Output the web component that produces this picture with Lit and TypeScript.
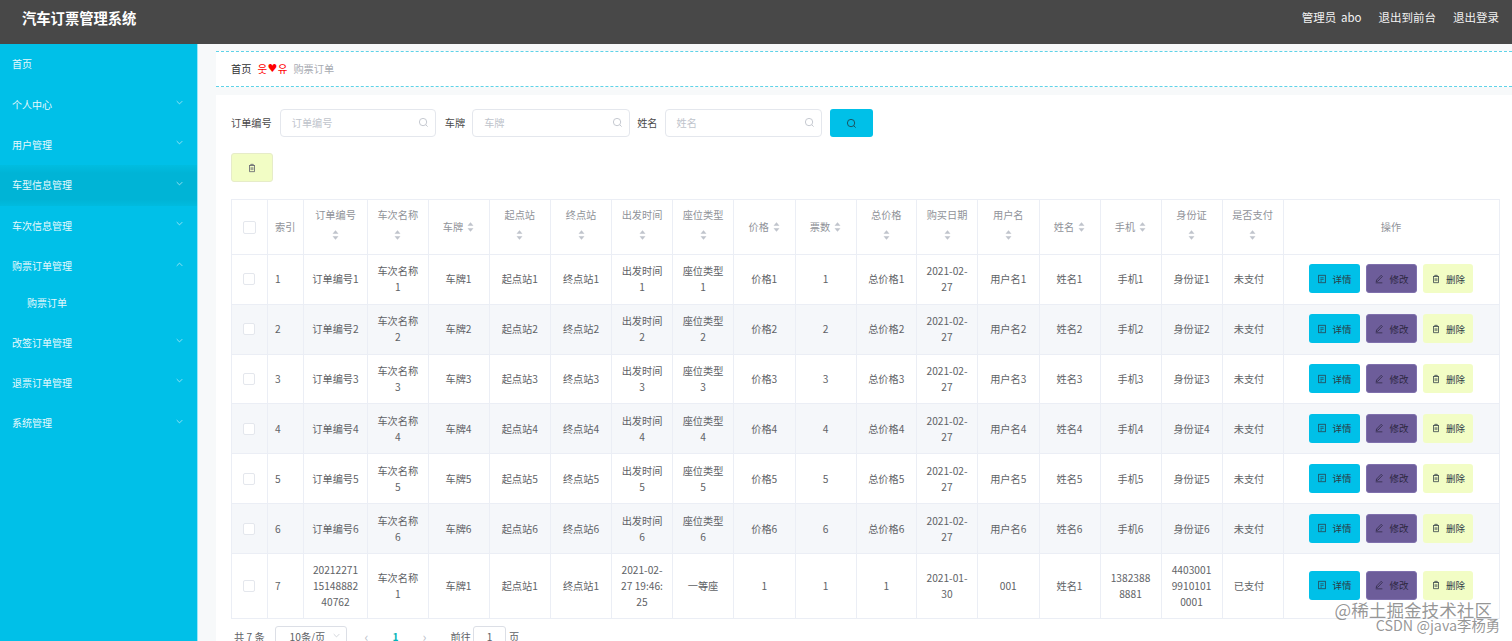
import { LitElement, html, css, svg } from "lit";
import { customElement } from "lit/decorators.js";

const search = html`<svg class="ic-search" viewBox="0 0 12 12" fill="none" stroke="#c0c4cc" stroke-width="1"><circle cx="5.5" cy="5.5" r="4"/><path d="M8.5 8.5l2 2"/></svg>`;
const trash = svg`<path d="M2.5 3h7M4.5 3V1.6h3V3M3 3v7.4h6V3M5 5v3.5M7 5v3.5" fill="none" stroke="currentColor" stroke-width=".9"/>`;
const doc = svg`<rect x="2" y="1.5" width="8" height="9" fill="none" stroke="currentColor" stroke-width=".9"/><path d="M4 4.5h4M4 6.5h4M4 8.5h2" stroke="currentColor" stroke-width=".8"/>`;
const pen = svg`<path d="M8.6 1.6l1.4 1.4-5.4 5.6-2 .6.5-2zM2 10.6h8" fill="none" stroke="currentColor" stroke-width=".9"/>`;
const icon = (p: unknown) => html`<svg class="ic" viewBox="0 0 12 12">${p}</svg>`;
const caret = html`<svg class="caret" viewBox="0 0 8 11"><path d="M4 0l3.4 4H.6zM4 11L.6 7h6.8z" fill="#c0c4cc"/></svg>`;
const chev = (up = false) => html`<svg class="chev" viewBox="0 0 10 6" fill="none" stroke="#cdeff8" stroke-width="1"><path d=${up ? "M1 5l4-4 4 4" : "M1 1l4 4 4-4"}/></svg>`;

const menu: { t: string; arrow?: "d" | "u"; sel?: boolean; sub?: boolean }[] = [
  { t: "首页" },
  { t: "个人中心", arrow: "d" },
  { t: "用户管理", arrow: "d" },
  { t: "车型信息管理", arrow: "d", sel: true },
  { t: "车次信息管理", arrow: "d" },
  { t: "购票订单管理", arrow: "u" },
  { t: "购票订单", sub: true },
  { t: "改签订单管理", arrow: "d" },
  { t: "退票订单管理", arrow: "d" },
  { t: "系统管理", arrow: "d" },
];

const widths = [36, 36, 64, 60.5, 61, 61.5, 61, 61, 61, 61.5, 61, 60.5, 61, 61.5, 61, 61, 61, 61, 216];
const heads: [string, "b" | "i"][] = [
  ["订单编号", "b"], ["车次名称", "b"], ["车牌", "i"], ["起点站", "b"], ["终点站", "b"], ["出发时间", "b"],
  ["座位类型", "b"], ["价格", "i"], ["票数", "i"], ["总价格", "b"], ["购买日期", "b"], ["用户名", "b"],
  ["姓名", "i"], ["手机", "i"], ["身份证", "b"], ["是否支付", "b"],
];
const names = ["订单编号", "车次名称", "车牌", "起点站", "终点站", "出发时间", "座位类型", "价格", "", "总价格", "", "用户名", "姓名", "手机", "身份证"];
const rows: string[][] = [1, 2, 3, 4, 5, 6].map((i) => [
  ...names.map((n, k) => (k === 8 ? String(i) : k === 10 ? "2021-02-27" : n + i)),
  "未支付",
]);
rows.push(["202122711514888240762", "车次名称1", "车牌1", "起点站1", "终点站1", "2021-02-27 19:46:25", "一等座", "1", "1", "1", "2021-01-30", "001", "姓名1", "13823888881", "440300199101010001", "已支付"]);

@customElement("app-root")
export class AppRoot extends LitElement {
  static styles = css`
    :host { display: block; width: 1512px; height: 641px; overflow: hidden; position: relative; font-family: "Noto Sans CJK SC", "Liberation Sans", sans-serif; font-size: 10.2px; color: #606266; background: #f7f9fa; }
    .top { height: 44px; box-sizing: border-box; background: #484848; display: flex; align-items: center; justify-content: space-between; padding: 0 13px 10px 22px; color: #fff; }
    .brand { font-size: 14.3px; font-weight: 700; }
    .links { display: flex; gap: 17px; font-size: 11.5px; color: #f2f2f2; }
    .who { word-spacing: 2px; }
    .body { display: flex; height: 597px; }
    .side { width: 198px; box-sizing: border-box; flex: none; background: #00c0e8; border-right: 1px solid #9be6f8; color: #e6f9fd; }
    .mi { height: 40.4px; box-sizing: border-box; padding: 0 14px 1px 12px; display: flex; align-items: center; justify-content: space-between; font-size: 10px; }
    .mi.on { background: linear-gradient(#00bde0, #00b4d6 20%, #00b4d6 85%, #00bbdf); }
    .mi.sub { height: 36px; padding: 0 14px 3px 27px; }
    .chev { width: 7px; height: 5px; margin-bottom: 3px; }
    .main { flex: 1; min-width: 0; padding: 7px 0 0 18px; display: flex; flex-direction: column; }
    .crumb { height: 36px; box-sizing: border-box; background: #fff; border-top: 1px dashed #5fd3e8; border-bottom: 1px dashed #5fd3e8; display: flex; align-items: center; padding: 0 0 2px 15px; gap: 6px; color: #303133; flex: none; }
    .sep { color: #f00; font-size: 11px; display: flex; align-items: center; width: 30px; justify-content: space-between; font-family: "DejaVu Sans", sans-serif; }
    .sep2 { font-family: "Noto Sans CJK KR", sans-serif; font-size: 10.5px; }
    .crumb .cur { color: #a8abb2; }
    .panel { flex: 1; margin-top: 8px; background: #fff; padding: 14px 12px 0 15px; min-height: 0; }
    .filters { display: flex; align-items: center; height: 28px; color: #4a4a4a; }
    .filters > span { margin-bottom: 2px; }
    .inp { height: 28px; box-sizing: border-box; border: 1px solid #e4e7ed; border-radius: 4px; display: flex; align-items: center; justify-content: space-between; padding: 0 6px 2px 11px; color: #c0c4cc; }
    .i1 { width: 156px; margin: 0 9px 0 8px; }
    .i2 { width: 158px; margin: 0 7px 0 7px; }
    .i3 { width: 157px; margin: 0 8px 0 7px; }
    .ic-search { width: 11px; height: 11px; }
    .sbtn { width: 43px; height: 28px; border-radius: 3px; background: #00c0e8; display: flex; align-items: center; justify-content: center; }
    .ic { width: 10px; height: 10px; flex: none; }
    .del { margin-top: 16px; width: 42px; height: 29px; box-sizing: border-box; border: 1px solid #e6ecc8; border-radius: 3px; background: #f2fdc5; display: flex; align-items: center; justify-content: center; color: #556; }
    table { margin-top: 17px; width: 1268px; table-layout: fixed; border-collapse: collapse; border-top: 1px solid #ebeef5; border-left: 1px solid #ebeef5; border-right: 1px solid #ebeef5; background: #fff; }
    th, td { border-bottom: 1px solid #ebeef5; border-right: 1px solid #ebeef5; padding: 0 7.5px; text-align: center; line-height: 16px; font-weight: 400; box-sizing: border-box; word-break: break-all; overflow: hidden; }
    th { height: 55px; color: #909399; line-height: 20px; padding: 0 4px; }
    td { height: 49.83px; }
    td:nth-last-child(2) { padding-right: 14px; padding-left: 7px; }
    tr.tall td { height: 65px; }
    tr.st td { background: #f5f7fa; }
    th.l, td.l { text-align: left; padding-left: 7px; padding-right: 0; }
    th.cbc, td.cbc { padding: 0 0 0 11px; text-align: left; }
    .cb { display: block; width: 10px; height: 10px; border: 1px solid #e4e7ed; border-radius: 2px; background: #fff; }
    th .cb { width: 11px; height: 11px; }
    .caret { width: 7px; height: 10px; vertical-align: -1px; }
    .b { display: block; }
    .b .caret { display: block; margin: 5px auto 10px; }
    .i .caret { margin-left: 4px; }
    .acts { display: flex; justify-content: center; gap: 6px; margin-bottom: 1px; }
    .btn { width: 51px; height: 29px; box-sizing: border-box; border-radius: 3px; display: flex; align-items: center; justify-content: center; gap: 5px; font-size: 9.5px; color: #2e3a45; }
    .btn.a { background: #00c0e8; }
    .btn.e { background: #6d5d9a; color: #2c2740; border: 1px solid #7f70ad; }
    .btn.d { background: #f2fdc5; width: 50px; }
    td.td-a { padding: 0; }
    .pager { display: flex; align-items: center; height: 18px; margin-top: 9px; padding-left: 3px; }
    .psel { width: 72px; height: 22px; box-sizing: border-box; border: 1px solid #dcdfe6; border-radius: 3px; margin-left: 10px; display: flex; align-items: center; justify-content: space-between; padding: 0 6px 0 14px; flex: none; }
    .nav { color: #c0c4cc; margin-left: 18px; width: 8px; font-size: 13px; }
    .pg { color: #00b5b8; font-weight: 700; margin-left: 20px; width: 10px; }
    .nav2 { margin-left: 20px; }
    .go { margin-left: 20px; }
    .gi { width: 33px; height: 22px; box-sizing: border-box; border: 1px solid #dcdfe6; border-radius: 3px; margin: 0 3px 0 2px; display: flex; align-items: center; justify-content: center; flex: none; }
    .wm { position: absolute; right: 20px; top: 599px; font-size: 17.6px; color: rgba(110,110,110,.72); line-height: 22px; white-space: nowrap; }
    .wm2 { position: absolute; right: 12px; top: 616px; font-size: 14.3px; color: rgba(110,110,110,.72); line-height: 18px; white-space: nowrap; }
  `;

  render() {
    return html`
      <div class="top">
        <div class="brand">汽车订票管理系统</div>
        <div class="links"><span class="who">管理员 abo</span><span>退出到前台</span><span>退出登录</span></div>
      </div>
      <div class="body">
        <nav class="side">
          ${menu.map((m) => html`<div class="mi ${m.sel ? "on" : ""} ${m.sub ? "sub" : ""}"><span>${m.t}</span>${m.arrow ? chev(m.arrow === "u") : ""}</div>`)}
        </nav>
        <main class="main">
          <div class="crumb"><span>首页</span><span class="sep"><span class="sep2">웃</span>♥<span class="sep2">유</span></span><span class="cur">购票订单</span></div>
          <section class="panel">
            <div class="filters">
              <span>订单编号</span><div class="inp i1"><span>订单编号</span>${search}</div>
              <span>车牌</span><div class="inp i2"><span>车牌</span>${search}</div>
              <span>姓名</span><div class="inp i3"><span>姓名</span>${search}</div>
              <div class="sbtn"><svg class="ic-search" viewBox="0 0 12 12" fill="none" stroke="#1c4a57" stroke-width="1"><circle cx="5.5" cy="5.5" r="4"/><path d="M8.5 8.5l2 2"/></svg></div>
            </div>
            <div class="del"><svg class="ic" viewBox="0 0 12 12">${trash}</svg></div>
            <table>
              <colgroup>${widths.map((w) => html`<col style="width:${w}px" />`)}</colgroup>
              <thead><tr>
                <th class="cbc"><span class="cb"></span></th>
                <th class="l">索引</th>
                ${heads.map(([t, k]) => k === "b"
                  ? html`<th><span class="b">${t}${caret}</span></th>`
                  : html`<th><span class="i">${t}${caret}</span></th>`)}
                <th>操作</th>
              </tr></thead>
              <tbody>
                ${rows.map((r, i) => html`<tr class="${i % 2 ? "st" : ""} ${i === 6 ? "tall" : ""}">
                  <td class="cbc"><span class="cb"></span></td>
                  <td class="l">${i + 1}</td>
                  ${r.map((c) => html`<td>${c}</td>`)}
                  <td class="td-a"><div class="acts">
                    <div class="btn a">${icon(doc)}<span>详情</span></div>
                    <div class="btn e">${icon(pen)}<span>修改</span></div>
                    <div class="btn d">${icon(trash)}<span>删除</span></div>
                  </div></td>
                </tr>`)}
              </tbody>
            </table>
            <div class="pager">
              <span>共 7 条</span>
              <div class="psel"><span>10条/页</span><svg class="chev" viewBox="0 0 10 6" fill="none" stroke="#c0c4cc" stroke-width="1"><path d="M1 1l4 4 4-4"/></svg></div>
              <span class="nav">‹</span><span class="pg">1</span><span class="nav nav2">›</span>
              <span class="go">前往</span><div class="gi">1</div><span>页</span>
            </div>
          </section>
        </main>
      </div>
      <div class="wm">@稀土掘金技术社区</div>
      <div class="wm2">CSDN @java李杨勇</div>
    `;
  }
}
